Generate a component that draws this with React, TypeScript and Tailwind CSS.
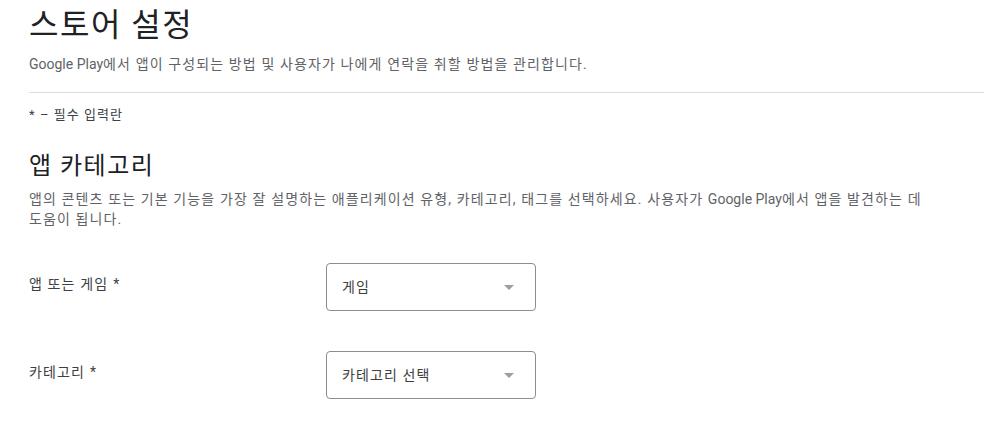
import React from "react";

function T({ text }: { text: string }) {
  const parts = text.split(/([A-Za-z]+(?: [A-Za-z]+)*)/);
  return (
    <>
      {parts.map((p, i) =>
        /^[A-Za-z]/.test(p) ? (
          <span key={i} className="tracking-normal">
            {p}
          </span>
        ) : (
          <span key={i} className="tracking-[0.08em]">
            {p}
          </span>
        )
      )}
    </>
  );
}

function Select({ value }: { value: string }) {
  return (
    <div className="flex h-[48px] w-[210px] items-center justify-between rounded-[4px] border border-[#8a8d91] pl-[15px] pr-[21px] text-[14px] text-[#3c4043]">
      <span className="tracking-[0.08em]">{value}</span>
      <svg width="10" height="5" viewBox="0 0 10 5">
        <path d="M0 0 L5 5 L10 0 Z" fill="#9e9e9e" />
      </svg>
    </div>
  );
}

function Row({ label, value, mt }: { label: string; value: string; mt: string }) {
  return (
    <div className={`flex items-start ${mt}`}>
      <div className="w-[297px] pt-[11px] text-[14px] leading-[20px] text-[#3c4043]">
        <span className="tracking-[0.08em]">{label}</span>
        <span className="ml-[5px]">*</span>
      </div>
      <Select value={value} />
    </div>
  );
}

export default function App() {
  return (
    <div
      className="min-h-[427px] w-[984px] bg-white pl-[29px]"
      style={{ fontFamily: "Roboto, 'Noto Sans CJK KR', sans-serif" }}
    >
      <h1 className="pt-[5px] text-[32px] leading-[40px] font-normal tracking-[1.5px] text-[#202124]">스토어 설정</h1>
      <p className="mt-[9px] text-[14px] leading-[20px] text-[#5f6368]">
        <T text="Google Play에서 앱이 구성되는 방법 및 사용자가 나에게 연락을 취할 방법을 관리합니다." />
      </p>
      <div className="mt-[18px] h-px bg-[#dadce0]" />
      <p className="mt-[12px] text-[13px] leading-[20px] text-[#3c4043]">
        <T text="* – 필수 입력란" />
      </p>
      <h2 className="mt-[25px] text-[24px] leading-[32px] font-normal tracking-[1.5px] text-[#202124]">앱 카테고리</h2>
      <p className="mt-[7px] max-w-[900px] text-[14px] leading-[20px] text-[#5f6368]">
        <T text="앱의 콘텐츠 또는 기본 기능을 가장 잘 설명하는 애플리케이션 유형, 카테고리, 태그를 선택하세요. 사용자가 Google Play에서 앱을 발견하는 데 도움이 됩니다." />
      </p>
      <Row label="앱 또는 게임" value="게임" mt="mt-[34px]" />
      <Row label="카테고리" value="카테고리 선택" mt="mt-[40px]" />
    </div>
  );
}
